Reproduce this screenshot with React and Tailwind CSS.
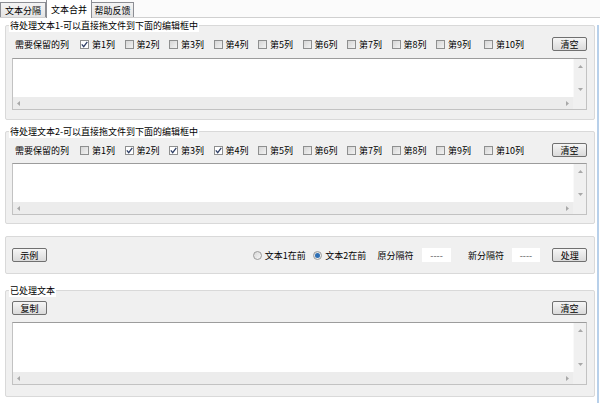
import React from 'react'

const FONT = "font-['Noto_Sans_CJK_SC','Noto_Sans',sans-serif]"

function Check({ checked }) {
  return (
    <span
      className={`flex h-[9px] w-[9px] items-center justify-center border border-[#8e8f8f] ${
        checked ? 'bg-white' : 'bg-linear-to-br from-[#d6d6d6] to-[#f2f2f2]'
      }`}
    >
      {checked && (
        <svg width="7" height="7" viewBox="0 0 7 7">
          <path d="M0.8 3.4 L2.7 5.6 L6.3 0.9" stroke="#2f3f66" strokeWidth="1.3" fill="none" />
        </svg>
      )}
    </span>
  )
}

function Radio({ checked }) {
  return (
    <span className="flex h-[9px] w-[9px] items-center justify-center rounded-full border border-[#9a9a9a] bg-linear-to-br from-[#d8d8d8] to-[#f6f6f6]">
      {checked && <span className="h-[5px] w-[5px] rounded-full bg-[#2e6fb4]" />}
    </span>
  )
}

function Btn({ children, className = '' }) {
  return (
    <button
      className={`flex h-[14px] w-[35px] items-center justify-center rounded-[2px] border border-[#707070] bg-linear-to-b from-[#f6f6f6] to-[#dadada] text-[9px] leading-none text-black ${className}`}
    >
      {children}
    </button>
  )
}

const Arrow = ({ dir }) => {
  const d = {
    up: 'M0 4 L2.5 1 L5 4 Z',
    down: 'M0 1 L2.5 4 L5 1 Z',
    left: 'M4 0 L1 2.5 L4 5 Z',
    right: 'M1 0 L4 2.5 L1 5 Z',
  }[dir]
  return (
    <svg width="5" height="5" viewBox="0 0 5 5">
      <path d={d} fill="#a8a8a8" />
    </svg>
  )
}

function TextBox({ white }) {
  return (
    <div className="flex w-[575px] flex-col border border-[#c2c2c2] border-t-[#9c9c9c] bg-white">
      <div className={`flex ${white}`}>
        <div className="flex-1" />
        <div className="flex w-[13px] flex-col items-center justify-between border-l border-[#f9f9f9] bg-[#f0f0f0] py-[5px]">
          <Arrow dir="up" />
          <Arrow dir="down" />
        </div>
      </div>
      <div className="flex h-[12px]">
        <div className="flex flex-1 items-center justify-between bg-[#ececec] px-[3px]">
          <Arrow dir="left" />
          <Arrow dir="right" />
        </div>
        <div className="w-[13px] bg-[#f0f0f0]" />
      </div>
    </div>
  )
}

function ColumnRow({ checked }) {
  const cols = [1, 2, 3, 4, 5, 6, 7, 8, 9, 10]
  return (
    <div className="flex h-[14px] items-center">
      <span className="ml-[3px] w-[65px] text-[9px] leading-none">需要保留的列</span>
      {cols.map((n) => (
        <label key={n} className={`flex items-center gap-[3px] ${n === 9 ? 'w-[48px]' : 'w-[44.5px]'}`}>
          <Check checked={checked.includes(n)} />
          <span className="text-[9px] leading-none">第{n}列</span>
        </label>
      ))}
      <Btn className="ml-auto">清空</Btn>
    </div>
  )
}

function Group({ title, className, children }) {
  return (
    <div className={`relative w-[590px] rounded-[2px] border border-[#d9d9d9] bg-[#f0f0f0] pl-[6px] pr-[7px] ${className}`}>
      {title && (
        <span className="absolute left-[3px] top-[-7px] bg-white px-px text-[9px] leading-[13px]">{title}</span>
      )}
      {children}
    </div>
  )
}

export default function App() {
  return (
    <div className={`relative h-[403px] w-[600px] overflow-hidden bg-white text-black ${FONT}`}>
      {/* tabs */}
      <div className="flex h-[18px] items-end border-b border-[#d0d0d0] bg-[#fbfbfb]">
        <div className="flex h-[15px] w-[46px] items-center justify-center border border-b-0 border-[#8c8e94] bg-linear-to-b from-[#f4f4f4] to-[#e4e4e4] text-[9px] leading-none">
          文本分隔
        </div>
        <div className="relative z-10 -mb-px flex h-[19px] w-[46px] items-center justify-center border border-b-0 border-[#8c8e94] bg-white text-[9px] leading-none">
          文本合并
        </div>
        <div className="flex h-[15px] w-[42px] items-center justify-center border border-b-0 border-l-0 border-[#8c8e94] bg-linear-to-b from-[#f4f4f4] to-[#e4e4e4] text-[9px] leading-none">
          帮助反馈
        </div>
      </div>

      <div className="h-[385px] w-[599px] border-r-2 border-[#b8d0ea] pl-[5px]">
        <Group title="待处理文本1-可以直接拖文件到下面的编辑框中" className="mt-[7px] h-[95px] pt-[11px]">
          <ColumnRow checked={[1]} />
          <div className="mt-[7px]">
            <TextBox white="h-[38px]" />
          </div>
        </Group>

        <Group title="待处理文本2-可以直接拖文件到下面的编辑框中" className="mt-[11px] h-[93px] pt-[11px]">
          <ColumnRow checked={[2, 3, 4]} />
          <div className="mt-[6px]">
            <TextBox white="h-[38px]" />
          </div>
        </Group>

        <Group className="mt-[12px] flex h-[38px] items-center">
          <Btn>示例</Btn>
          <label className="ml-[206px] flex w-[61px] items-center gap-[3px]">
            <Radio />
            <span className="text-[9px] leading-none">文本1在前</span>
          </label>
          <label className="flex w-[65px] items-center gap-[3px]">
            <Radio checked />
            <span className="text-[9px] leading-none">文本2在前</span>
          </label>
          <span className="w-[45px] text-[9px] leading-none">原分隔符</span>
          <div className="flex h-[14px] w-[29px] items-center justify-center bg-white text-[9px] leading-none text-[#555]">----</div>
          <span className="ml-[17px] w-[44px] text-[9px] leading-none">新分隔符</span>
          <div className="flex h-[14px] w-[29px] items-center justify-center bg-white text-[9px] leading-none text-[#555]">----</div>
          <Btn className="ml-[12px]">处理</Btn>
        </Group>

        <Group title="已处理文本" className="mt-[16px] h-[107px] pt-[10px]">
          <div className="flex h-[14px] items-center">
            <Btn>复制</Btn>
            <Btn className="ml-auto">清空</Btn>
          </div>
          <div className="mt-[7px]">
            <TextBox white="h-[49px]" />
          </div>
        </Group>
      </div>
    </div>
  )
}
